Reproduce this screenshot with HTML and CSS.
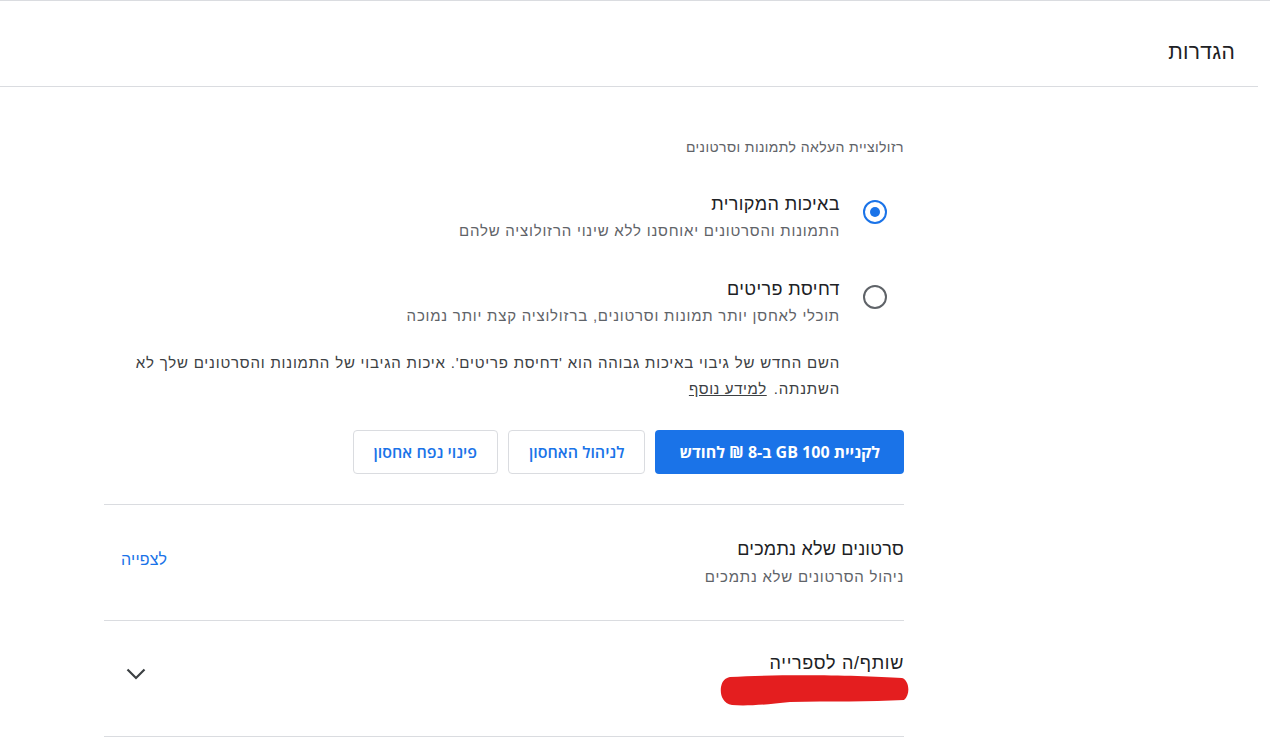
FILE: index.html
```html
<!DOCTYPE html>
<html lang="he" dir="rtl">
<head>
<meta charset="utf-8">
<title>הגדרות</title>
<link rel="stylesheet" href="styles.css">
</head>
<body>
<div class="page">
  <header class="topbar">
    <h1 class="title">הגדרות</h1>
  </header>
  <main class="content">
    <section class="upload">
      <div class="label">רזולוציית העלאה לתמונות וסרטונים</div>
      <div class="option">
        <span class="radio checked"></span>
        <div class="option-text">
          <div class="opt-title">באיכות המקורית</div>
          <div class="opt-desc">התמונות והסרטונים יאוחסנו ללא שינוי הרזולוציה שלהם</div>
        </div>
      </div>
      <div class="option">
        <span class="radio"></span>
        <div class="option-text">
          <div class="opt-title">דחיסת פריטים</div>
          <div class="opt-desc">תוכלי לאחסן יותר תמונות וסרטונים, ברזולוציה קצת יותר נמוכה</div>
        </div>
      </div>
      <p class="note">השם החדש של גיבוי באיכות גבוהה הוא 'דחיסת פריטים'. איכות הגיבוי של התמונות והסרטונים שלך לא השתנתה. <a class="more" href="#">למידע נוסף</a></p>
      <div class="actions">
        <button class="btn primary">לקניית 100 GB ב-8 ₪ לחודש</button>
        <button class="btn outline">לניהול האחסון</button>
        <button class="btn outline">פינוי נפח אחסון</button>
      </div>
    </section>
    <section class="row">
      <div class="row-text">
        <div class="row-title">סרטונים שלא נתמכים</div>
        <div class="row-desc">ניהול הסרטונים שלא נתמכים</div>
      </div>
      <a class="link" href="#">לצפייה</a>
    </section>
    <section class="row last">
      <div class="row-text">
        <div class="row-title wide">שותף/ה לספרייה</div>
        <svg class="redact" width="190" height="32" viewBox="0 0 190 32" aria-hidden="true">
          <path d="M10 3 C60 0 140 1 182 4 C189 6 191 20 184 26 C150 28 110 27 70 28 C45 31 25 32 12 31 C2 29 0 20 1 13 C2 7 5 4 10 3 Z" fill="#e41e1f"/>
        </svg>
      </div>
      <span class="chevron">
        <svg width="20" height="12" viewBox="0 0 20 12" aria-hidden="true"><path d="M1.5 1.5 L10 10 L18.5 1.5" fill="none" stroke="#3c4043" stroke-width="2.2"/></svg>
      </span>
    </section>
  </main>
</div>
</body>
</html>
```
FILE: styles.css
```css
* { box-sizing: border-box; }
html, body { margin: 0; padding: 0; background: #fff; }
body {
  font-family: "Liberation Sans", Arial, "DejaVu Sans", sans-serif;
  color: #202124;
  border-top: 1px solid #dadce0;
}
.page { width: 1258px; margin-left: 0; margin-right: auto; }
.topbar {
  height: 86px;
  border-bottom: 1px solid #dadce0;
  display: flex;
  align-items: center;
  padding-right: 23px;
  padding-top: 16px;
}
.title { margin: 0; font-size: 21px; font-weight: 400; letter-spacing: 0.3px; color: #202124; }
.content {
  margin-right: 354px;
  width: 800px;
}
.upload { padding-top: 50px; border-bottom: 1px solid #dadce0; padding-bottom: 30px; }
.label { font-size: 14px; line-height: 20px; color: #5f6368; letter-spacing: 0.4px; }
.option {
  display: flex;
  align-items: flex-start;
  margin-top: 35px;
}
.option + .option { margin-top: 35px; }
.radio {
  width: 24px; height: 24px;
  border-radius: 50%;
  border: 2px solid #5f6368;
  margin-right: 17px;
  margin-left: 23px;
  margin-top: 8px;
  flex: none;
  position: relative;
}
.radio.checked { border-color: #1a73e8; }
.radio.checked::after {
  content: "";
  position: absolute;
  width: 10px; height: 10px;
  border-radius: 50%;
  background: #1a73e8;
  top: 5px; right: 5px;
}
.opt-title { font-size: 18px; line-height: 24px; color: #202124; letter-spacing: 0.4px; }
.opt-desc { font-size: 15px; line-height: 22px; color: #5f6368; margin-top: 4px; letter-spacing: 0.78px; }
.note {
  margin: 23px 64px 0 0;
  font-size: 15px;
  line-height: 26px;
  color: #3c4043;
  letter-spacing: 0.8px;
}
.more { color: #3c4043; text-decoration: underline; display: inline-block; margin-right: 2px; letter-spacing: 0.6px; }
.actions { display: flex; gap: 10px; margin-top: 28px; }
.btn {
  height: 44px;
  border-radius: 4px;
  font-family: "Open Sans", "Liberation Sans", sans-serif;
  font-size: 16px;
  font-weight: 600;
  padding: 0 20px;
  cursor: pointer;
}
.btn.primary { background: #1a73e8; color: #fff; border: none; padding: 0 24px; font-weight: 700; }
.btn.outline { background: #fff; color: #1a73e8; border: 1px solid #dadce0; }
.row {
  display: flex;
  justify-content: space-between;
  align-items: center;
  border-bottom: 1px solid #dadce0;
  height: 116px;
  padding-left: 17px;
}
.row-title { font-size: 18px; line-height: 24px; color: #202124; letter-spacing: 0.2px; }
.row-title.wide { letter-spacing: 0.7px; }
.row-desc { font-size: 15px; line-height: 22px; color: #5f6368; margin-top: 5px; letter-spacing: 0.75px; }
.link { color: #1a73e8; text-decoration: none; font-size: 16px; margin-top: -6px; letter-spacing: 0.2px; }
.row.last .row-text { margin-top: 0; }
.redact { display: block; margin-top: -1px; margin-right: -6px; }
.chevron { display: flex; width: 24px; justify-content: center; margin-left: 3px; margin-top: -10px; }
```
